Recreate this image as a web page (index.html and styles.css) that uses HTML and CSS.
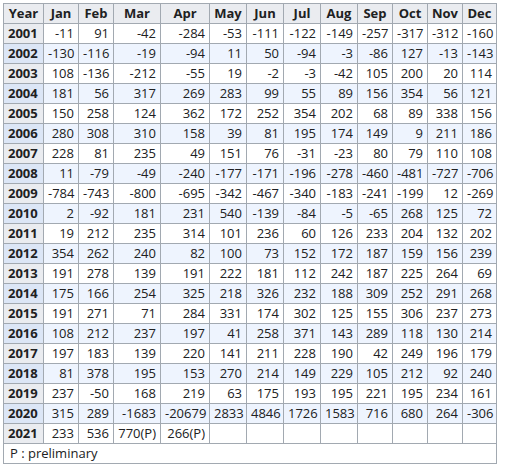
FILE: index.html
```html
<!DOCTYPE html>
<html lang="en">
<head>
    <meta charset="UTF-8">
    <title>Monthly changes by year</title>
    <link rel="stylesheet" href="styles.css">
</head>
<body>
    <table class="data-table">
        <colgroup>
            <col class="c-year"><col class="c-jan"><col class="c-feb"><col class="c-mar"><col class="c-apr"><col class="c-mid"><col class="c-mid"><col class="c-mid"><col class="c-mid"><col class="c-sm"><col class="c-sm"><col class="c-sm"><col class="c-dec">
        </colgroup>
        <thead>
            <tr>
                <th>Year</th><th>Jan</th><th>Feb</th><th>Mar</th><th>Apr</th><th>May</th><th>Jun</th>
                <th>Jul</th><th>Aug</th><th>Sep</th><th>Oct</th><th>Nov</th><th>Dec</th>
            </tr>
        </thead>
        <tbody id="table-body"></tbody>
        <tfoot>
            <tr><td colspan="13" class="note">P : preliminary</td></tr>
        </tfoot>
    </table>

    <script>
        // valores por año, de enero a diciembre
        const rows = [
            [2001, -11, 91, -42, -284, -53, -111, -122, -149, -257, -317, -312, -160],
            [2002, -130, -116, -19, -94, 11, 50, -94, -3, -86, 127, -13, -143],
            [2003, 108, -136, -212, -55, 19, -2, -3, -42, 105, 200, 20, 114],
            [2004, 181, 56, 317, 269, 283, 99, 55, 89, 156, 354, 56, 121],
            [2005, 150, 258, 124, 362, 172, 252, 354, 202, 68, 89, 338, 156],
            [2006, 280, 308, 310, 158, 39, 81, 195, 174, 149, 9, 211, 186],
            [2007, 228, 81, 235, 49, 151, 76, -31, -23, 80, 79, 110, 108],
            [2008, 11, -79, -49, -240, -177, -171, -196, -278, -460, -481, -727, -706],
            [2009, -784, -743, -800, -695, -342, -467, -340, -183, -241, -199, 12, -269],
            [2010, 2, -92, 181, 231, 540, -139, -84, -5, -65, 268, 125, 72],
            [2011, 19, 212, 235, 314, 101, 236, 60, 126, 233, 204, 132, 202],
            [2012, 354, 262, 240, 82, 100, 73, 152, 172, 187, 159, 156, 239],
            [2013, 191, 278, 139, 191, 222, 181, 112, 242, 187, 225, 264, 69],
            [2014, 175, 166, 254, 325, 218, 326, 232, 188, 309, 252, 291, 268],
            [2015, 191, 271, 71, 284, 331, 174, 302, 125, 155, 306, 237, 273],
            [2016, 108, 212, 237, 197, 41, 258, 371, 143, 289, 118, 130, 214],
            [2017, 197, 183, 139, 220, 141, 211, 228, 190, 42, 249, 196, 179],
            [2018, 81, 378, 195, 153, 270, 214, 149, 229, 105, 212, 92, 240],
            [2019, 237, -50, 168, 219, 63, 175, 193, 195, 221, 195, 234, 161],
            [2020, 315, 289, -1683, -20679, 2833, 4846, 1726, 1583, 716, 680, 264, -306],
            [2021, 233, 536, '770(P)', '266(P)', '', '', '', '', '', '', '', '']
        ];

        const tbody = document.getElementById('table-body');
        rows.forEach(row => {
            const tr = document.createElement('tr');
            row.forEach((value, i) => {
                const cell = document.createElement(i === 0 ? 'th' : 'td');
                cell.textContent = value;
                tr.appendChild(cell);
            });
            tbody.appendChild(tr);
        });
    </script>
</body>
</html>
```

FILE: styles.css
```css
body {
    margin: 0;
    padding: 3px;
    background-color: #fff;
    font-family: "Open Sans", "Noto Sans", sans-serif;
    font-size: 13px;
    color: #202122;
}

.data-table {
    border-collapse: collapse;
    table-layout: fixed;
    width: 494px;
    background-color: #fff;
}

.c-year { width: 40px; }
.c-jan { width: 35px; }
.c-feb { width: 35px; }
.c-mar { width: 47px; }
.c-apr { width: 49px; }
.c-mid { width: 37px; }
.c-sm { width: 35px; }
.c-dec { width: 34px; }

.data-table th,
.data-table td {
    border: 1px solid #a2a9b1;
    height: 19px;
    padding: 0 4px;
    line-height: 19px;
    white-space: nowrap;
    overflow: hidden;
}

.data-table thead th {
    background-color: #eaecf0;
    font-weight: bold;
    text-align: center;
}

.data-table tbody th {
    background-color: #eaecf0;
    font-weight: bold;
    text-align: left;
}

.data-table tbody td {
    text-align: right;
}

.data-table tbody tr:nth-child(even) td {
    background-color: #eef4fe;
}

.data-table tbody tr:nth-child(even) th {
    background-color: #dce6f6;
}

.data-table .note {
    text-align: left;
    padding-left: 6px;
}
```
